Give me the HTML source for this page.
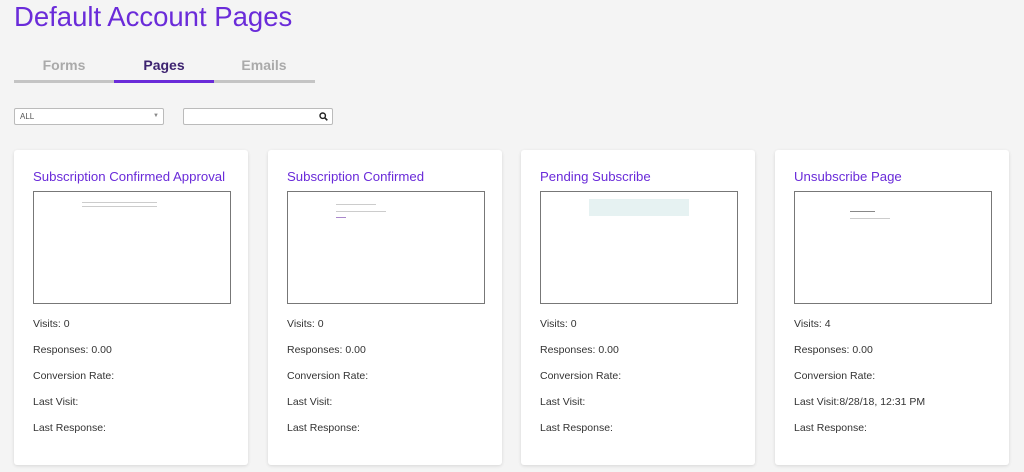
<!DOCTYPE html>
<html><head><style>
body{margin:0;width:1024px;height:472px;background:#f4f4f4;font-family:"Liberation Sans",sans-serif;position:relative;overflow:hidden}
h1{position:absolute;left:14px;top:0;margin:0;font-weight:normal;font-size:27.5px;color:#6a2bd9;line-height:34px}
.tabs{position:absolute;left:14px;top:52px;width:301px;height:31px;border-bottom:3px solid #c4c4c4;box-sizing:border-box}
.tab{position:absolute;top:5px;width:100px;text-align:center;font-size:14px;font-weight:bold;color:#aaa}
.tab.a{color:#3d2370;border-bottom:3px solid #6a2bd9;height:23px;}
.sel,.srch{position:absolute;top:108px;width:150px;height:17px;background:#fff;border:1px solid #bbb;border-radius:2px;box-sizing:border-box;font-size:8px;color:#555}
.card{position:absolute;top:150px;width:234px;height:315px;background:#fff;border-radius:3px;box-shadow:0 1px 3px rgba(0,0,0,.12)}
.card h2{position:absolute;left:19px;top:19px;margin:0;font-weight:normal;font-size:13.2px;color:#6a2bd9;white-space:nowrap}
.pv{position:absolute;left:19px;top:41px;width:198px;height:113px;border:1px solid #777;box-sizing:border-box}
.st{position:absolute;left:19px;font-size:10.5px;color:#333}
</style></head><body>
<h1>Default Account Pages</h1>
<div class="tabs"><div class="tab" style="left:0">Forms</div><div class="tab a" style="left:100px">Pages</div><div class="tab" style="left:200px">Emails</div></div>
<div class="sel" style="left:14px"><span style="position:absolute;left:5px;top:3px">ALL</span><span style="position:absolute;right:4px;top:4px;font-size:6px;color:#888">▼</span></div>
<div class="srch" style="left:183px"><svg style="position:absolute;right:4px;top:3px" width="9" height="9" viewBox="0 0 9 9"><circle cx="3.7" cy="3.7" r="2.7" fill="none" stroke="#222" stroke-width="1.4"/><path d="M5.7 5.7L8.3 8.3" stroke="#222" stroke-width="1.6"/></svg></div>

<div class="card" style="left:14px"><h2>Subscription Confirmed Approval</h2><div class="pv"><div style="position:absolute;left:48px;top:10px;width:75px;height:1px;background:#ccc"></div><div style="position:absolute;left:48px;top:14px;width:75px;height:1px;background:#ccc"></div></div>
<div class="st" style="top:168px">Visits: 0</div><div class="st" style="top:194px">Responses: 0.00</div><div class="st" style="top:220px">Conversion Rate:</div><div class="st" style="top:246px">Last Visit:</div><div class="st" style="top:272px">Last Response:</div></div>

<div class="card" style="left:268px"><h2>Subscription Confirmed</h2><div class="pv"><div style="position:absolute;left:48px;top:12px;width:40px;height:1px;background:#ccc"></div><div style="position:absolute;left:48px;top:19px;width:50px;height:1px;background:#ccc"></div><div style="position:absolute;left:48px;top:25px;width:10px;height:1px;background:#a8c"></div></div>
<div class="st" style="top:168px">Visits: 0</div><div class="st" style="top:194px">Responses: 0.00</div><div class="st" style="top:220px">Conversion Rate:</div><div class="st" style="top:246px">Last Visit:</div><div class="st" style="top:272px">Last Response:</div></div>

<div class="card" style="left:521px"><h2>Pending Subscribe</h2><div class="pv"><div style="position:absolute;left:48px;top:7px;width:100px;height:17px;background:#e6f2f2"></div></div>
<div class="st" style="top:168px">Visits: 0</div><div class="st" style="top:194px">Responses: 0.00</div><div class="st" style="top:220px">Conversion Rate:</div><div class="st" style="top:246px">Last Visit:</div><div class="st" style="top:272px">Last Response:</div></div>

<div class="card" style="left:775px"><h2>Unsubscribe Page</h2><div class="pv"><div style="position:absolute;left:55px;top:19px;width:25px;height:1px;background:#888"></div><div style="position:absolute;left:55px;top:26px;width:40px;height:1px;background:#ccc"></div></div>
<div class="st" style="top:168px">Visits: 4</div><div class="st" style="top:194px">Responses: 0.00</div><div class="st" style="top:220px">Conversion Rate:</div><div class="st" style="top:246px">Last Visit:8/28/18, 12:31 PM</div><div class="st" style="top:272px">Last Response:</div></div>
</body></html>
